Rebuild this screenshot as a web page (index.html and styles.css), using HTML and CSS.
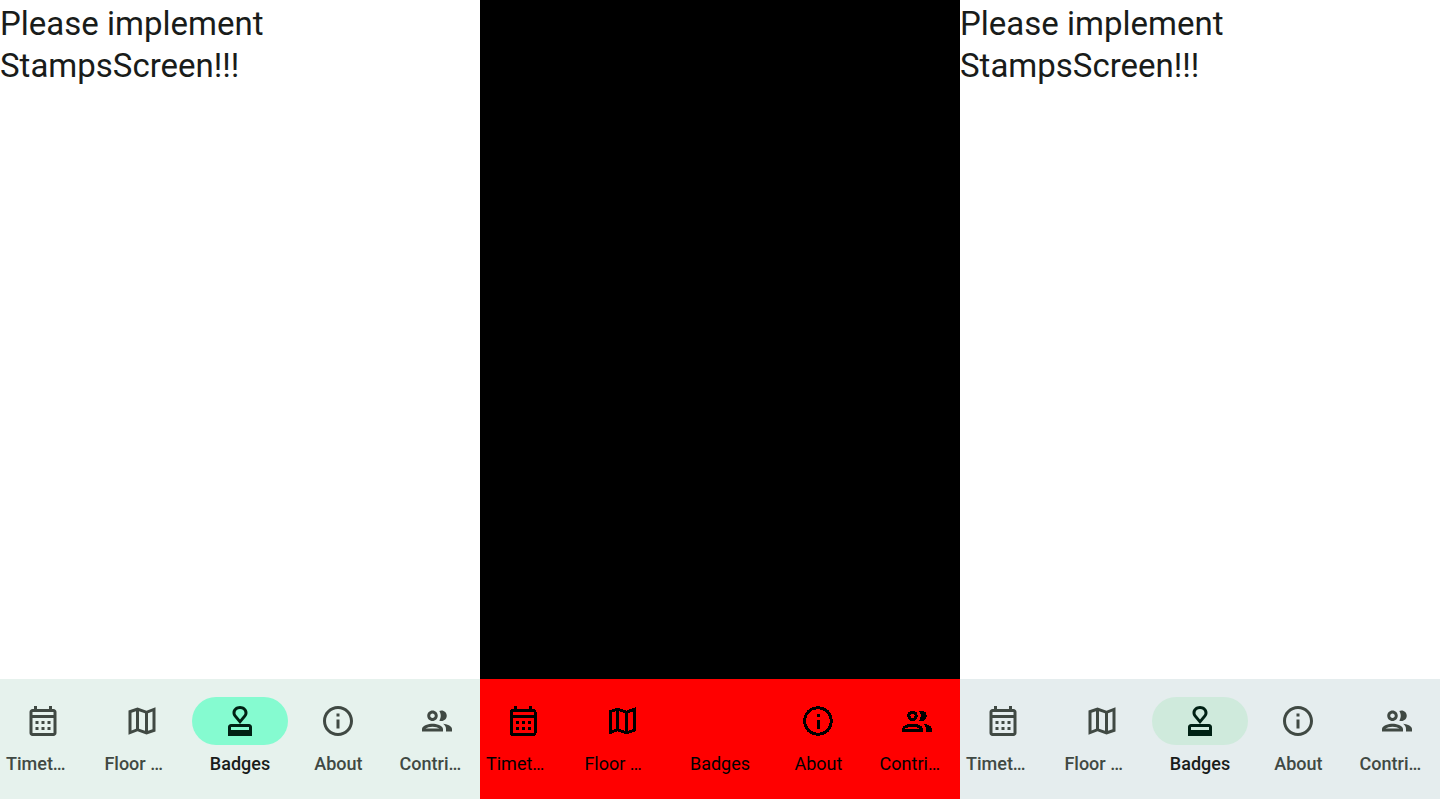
FILE: index.html
```html
<!DOCTYPE html>
<html lang="en">
<head>
<meta charset="utf-8">
<title>StampsScreen comparison</title>
<link rel="stylesheet" href="styles.css">
</head>
<body>
<svg class="sprite" aria-hidden="true">
  <symbol id="calendar" viewBox="0 0 24 24"><path d="M19 4h-1V2h-2v2H8V2H6v2H5c-1.11 0-1.99.9-1.99 2L3 20c0 1.1.89 2 2 2h14c1.1 0 2-.9 2-2V6c0-1.1-.9-2-2-2zm0 16H5V10h14v10zm0-12H5V6h14v2zM9 14H7v-2h2v2zm4 0h-2v-2h2v2zm4 0h-2v-2h2v2zm-8 4H7v-2h2v2zm4 0h-2v-2h2v2zm4 0h-2v-2h2v2z"/></symbol>
  <symbol id="map" viewBox="0 0 24 24"><path fill-rule="evenodd" d="M15 5.1L9 3 3 5.02v16.2l6-2.33 6 2.1 6-2.02V2.77L15 5.1zM10 5.47l4 1.4v11.66l-4-1.4V5.47zm-5 .99l3-1.01v11.7l-3 1.16V6.46zm14 11.08l-3 1.01V6.86l3-1.16v11.84z"/></symbol>
  <symbol id="stamp" viewBox="0 0 24 24"><path fill-rule="evenodd" d="M4 16v6h16v-6c0-1.1-.9-2-2-2H6c-1.1 0-2 .9-2 2zm14 2H6v-2h12v2zM12 2C9.300 2 7 3.900 7 6.500c0 1.200.4 2 1.100 2.900L12 14l3.900-4.600c.7-.9 1.100-1.700 1.100-2.900C17 3.900 14.700 2 12 2zm0 9L9.500 8C9.100 7.500 9 7.100 9 6.600 9 5.100 10.300 4 12 4s3 1.100 3 2.600c0 .5-.1.9-.5 1.400L12 11z"/></symbol>
  <symbol id="info" viewBox="0 0 24 24"><path d="M11 7h2v2h-2zm0 4h2v6h-2zm1-9C6.48 2 2 6.48 2 12s4.480 10 10 10 10-4.480 10-10S17.520 2 12 2zm0 18c-4.410 0-8-3.590-8-8s3.590-8 8-8 8 3.590 8 8-3.590 8-8 8z"/></symbol>
  <symbol id="people" viewBox="0 0 24 24"><path d="M9 13.75c-2.34 0-7 1.17-7 3.5V19h14v-1.75c0-2.33-4.66-3.5-7-3.5zM4.34 17c.84-.58 2.87-1.25 4.66-1.25s3.82.67 4.66 1.25H4.34zM9 12c1.93 0 3.500-1.570 3.500-3.500S10.930 5 9 5 5.500 6.570 5.500 8.500 7.070 12 9 12zm0-5c.83 0 1.500.67 1.500 1.500S9.830 10 9 10s-1.500-.67-1.500-1.500S8.170 7 9 7zm7.040 6.810c1.160.84 1.960 1.960 1.960 3.440V19h4v-1.750c0-2.020-3.500-3.170-5.960-3.440zM15 12c1.930 0 3.500-1.570 3.500-3.500S16.930 5 15 5c-.54 0-1.040.13-1.500.35.63.89 1 1.980 1 3.150s-.37 2.260-1 3.150c.46.22.96.35 1.500.35z"/></symbol>
</svg>
<main class="compare">
  <section class="panel before">
    <p class="message">Please implement StampsScreen!!!</p>
    <nav class="bar">
      <button class="item clipped"><span class="pill"><svg class="icon"><use href="#calendar"/></svg></span><span class="label">Timet…</span></button>
      <button class="item clipped"><span class="pill"><svg class="icon"><use href="#map"/></svg></span><span class="label">Floor …</span></button>
      <button class="item selected"><span class="pill"><svg class="icon"><use href="#stamp"/></svg></span><span class="label">Badges</span></button>
      <button class="item"><span class="pill"><svg class="icon"><use href="#info"/></svg></span><span class="label">About</span></button>
      <button class="item clipped"><span class="pill"><svg class="icon"><use href="#people"/></svg></span><span class="label">Contri…</span></button>
    </nav>
  </section>
  <section class="panel diff">
    <nav class="bar">
      <button class="item clipped"><span class="pill"><svg class="icon"><use href="#calendar"/></svg></span><span class="label">Timet…</span></button>
      <button class="item clipped"><span class="pill"><svg class="icon"><use href="#map"/></svg></span><span class="label">Floor …</span></button>
      <button class="item selected"><span class="pill"></span><span class="label">Badges</span></button>
      <button class="item"><span class="pill"><svg class="icon"><use href="#info"/></svg></span><span class="label">About</span></button>
      <button class="item clipped"><span class="pill"><svg class="icon"><use href="#people"/></svg></span><span class="label">Contri…</span></button>
    </nav>
  </section>
  <section class="panel after">
    <p class="message">Please implement StampsScreen!!!</p>
    <nav class="bar">
      <button class="item clipped"><span class="pill"><svg class="icon"><use href="#calendar"/></svg></span><span class="label">Timet…</span></button>
      <button class="item clipped"><span class="pill"><svg class="icon"><use href="#map"/></svg></span><span class="label">Floor …</span></button>
      <button class="item selected"><span class="pill"><svg class="icon"><use href="#stamp"/></svg></span><span class="label">Badges</span></button>
      <button class="item"><span class="pill"><svg class="icon"><use href="#info"/></svg></span><span class="label">About</span></button>
      <button class="item clipped"><span class="pill"><svg class="icon"><use href="#people"/></svg></span><span class="label">Contri…</span></button>
    </nav>
  </section>
</main>
</body>
</html>
```

FILE: styles.css
```css
* { box-sizing: border-box; }
body {
  margin: 0;
  font-family: Roboto, "Liberation Sans", sans-serif;
  color: #191c1a;
  background: #fff;
}
.sprite { display: none; }
.compare {
  display: grid;
  grid-template-columns: repeat(3, minmax(0, 1fr));
  min-height: 100vh;
}
.panel {
  display: flex;
  flex-direction: column;
  background: #fff;
}
.message {
  margin: 0;
  padding-top: 3px;
  font-size: 33px;
  line-height: 42px;
}
.bar {
  display: grid;
  grid-template-columns: repeat(5, minmax(0, 1fr));
  gap: 12px;
  margin-top: auto;
  padding: 18px 0 23px;
}
.item {
  display: flex;
  flex-direction: column;
  align-items: center;
  gap: 7px;
  padding: 0;
  border: 0;
  background: none;
  color: #404943;
  font-family: inherit;
  font-size: 18px;
  font-weight: 500;
  line-height: 24px;
}
.pill {
  display: flex;
  flex: none;
  align-items: center;
  justify-content: center;
  width: 96px;
  height: 48px;
  border-radius: 24px;
}
.icon {
  width: 36px;
  height: 36px;
  fill: currentColor;
}
.label {
  width: 100%;
  padding: 0 6px;
  text-align: center;
  white-space: nowrap;
}
.clipped .label { text-align: left; }
.selected .label { color: #191c1a; }
.selected .icon { color: #002114; }

.before .bar { background: #e6f2ed; }
.before .selected .pill { background: #85fbd0; }
.after .bar { background: #e5edee; }
.after .selected .pill { background: #cfeadc; }

.diff { background: #000; }
.diff .bar { background: #f00; }
.diff .item, .diff .selected .label {
  color: #000;
  font-weight: 400;
}
.diff .icon { shape-rendering: crispEdges; }
```
